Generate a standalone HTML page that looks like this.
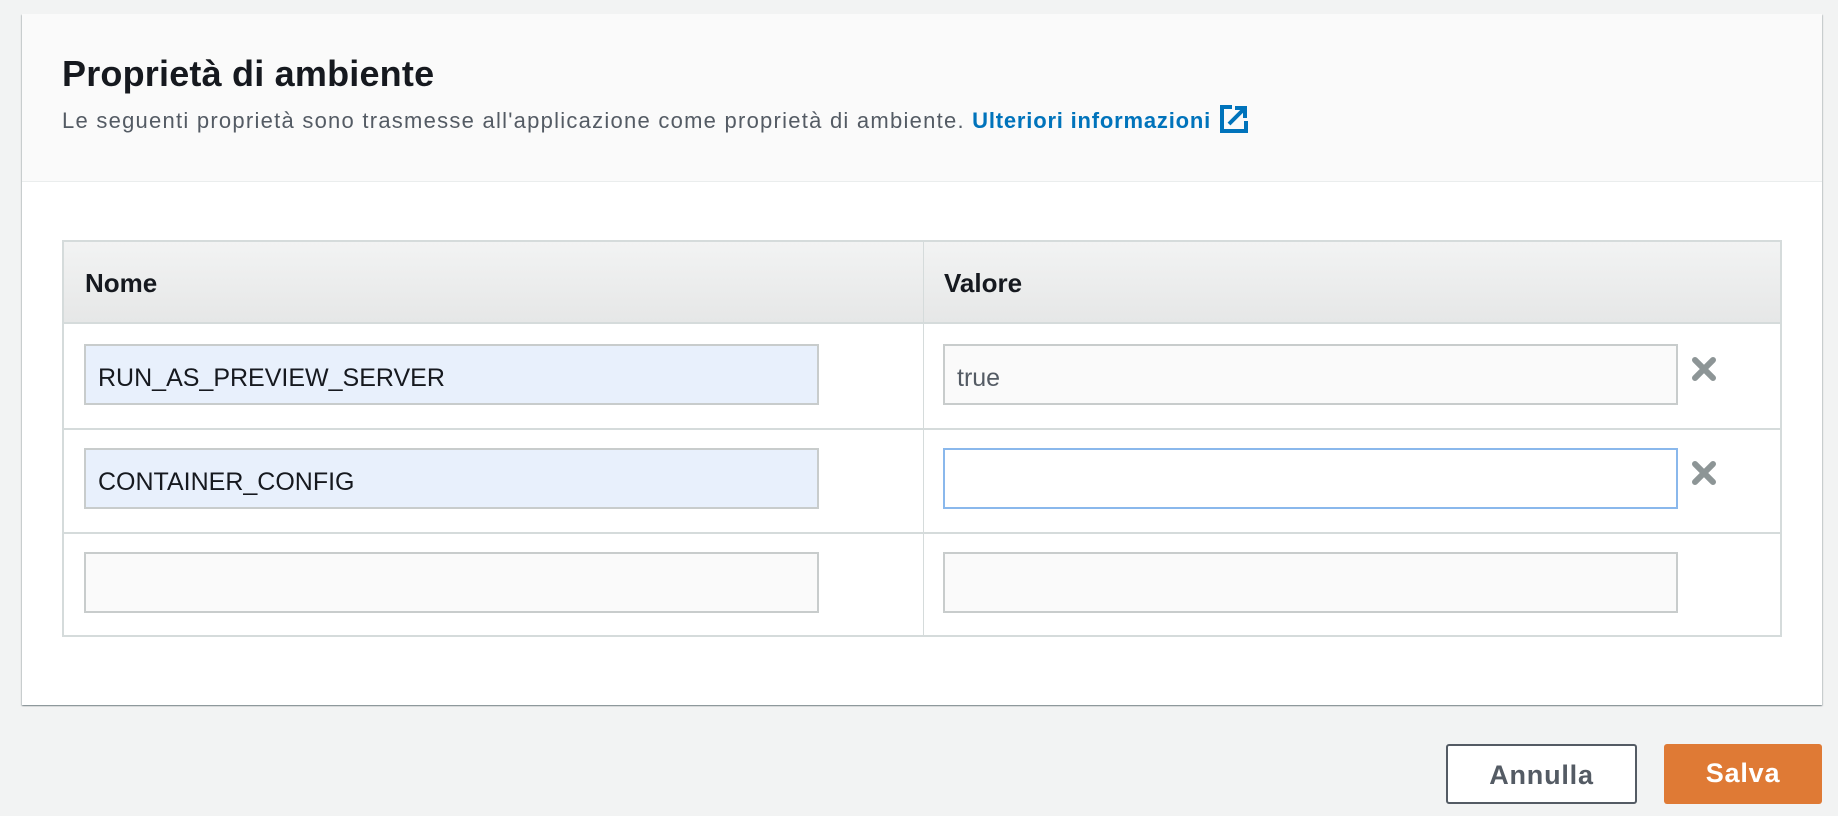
<!DOCTYPE html>
<html><head><meta charset="utf-8"><style>
*{box-sizing:border-box;margin:0;padding:0}
body{width:1838px;height:816px;background:#f2f3f3;font-family:"Liberation Sans",Arial,sans-serif;position:relative;overflow:hidden}
.card{position:absolute;left:22px;top:14px;width:1800px;height:691px;background:#fff;box-shadow:0 1px 1px rgba(0,28,36,.3),1px 1px 1px rgba(0,28,36,.15),-1px 1px 1px rgba(0,28,36,.15)}
.hdr{position:absolute;left:0;top:0;width:100%;height:168px;background:#fafafa;border-bottom:1px solid #eaeded}
h1{position:absolute;left:40px;top:39px;font-size:36px;font-weight:bold;color:#16191f;letter-spacing:0.2px}
.sub{position:absolute;left:40px;top:90px;font-size:22px;color:#545b64;white-space:nowrap;letter-spacing:1.25px}
.sub a{color:#0073bb;font-weight:bold;text-decoration:none;letter-spacing:0.8px}
.sub svg{vertical-align:-6px;margin-left:8px}
.tbl{position:absolute;left:62px;top:240px;width:1720px;height:397px;border:2px solid #d5dbdb}
.th{position:absolute;left:0;top:0;width:100%;height:82px;background:linear-gradient(#f2f3f3,#e6e7e7);border-bottom:2px solid #d5dbdb}
.th span{position:absolute;top:26px;font-size:26px;font-weight:bold;color:#16191f}
.vd{position:absolute;left:859px;top:0;width:1px;height:100%;background:#d5dbdb}
.hl{position:absolute;left:0;width:100%;height:2px;background:#d5dbdb}
.in{position:absolute;height:61px;border:2px solid #c8cccc;background:#fafafa;font-size:25px;color:#16191f;padding:18px 0 0 12px}
.in.a{background:#e8f0fc}
.in.f{background:#fff;border-color:#8ab8ec}
.x{position:absolute;width:26px;height:26px}
.btn{position:absolute;top:744px;height:60px;border-radius:3px;font-size:27px;font-weight:bold;text-align:center;line-height:58px;letter-spacing:0.8px}
</style></head><body>
<div class="card">
 <div class="hdr">
  <h1>Proprietà di ambiente</h1>
  <div class="sub">Le seguenti proprietà sono trasmesse all'applicazione come proprietà di ambiente. <a>Ulteriori informazioni</a><svg width="30" height="30" viewBox="0 0 30 30"><path d="M13 3H3v24h24V17" fill="none" stroke="#0073bb" stroke-width="4"/><path d="M10 20L24 6M16 4h10v10" fill="none" stroke="#0073bb" stroke-width="4"/></svg></div>
 </div>
</div>
<div class="tbl">
 <div class="th"><span style="left:21px">Nome</span><span style="left:880px">Valore</span></div>
 <div class="vd"></div>
 <div class="hl" style="top:186px"></div>
 <div class="hl" style="top:290px"></div>
</div>
<div class="in a" style="left:84px;top:344px;width:735px">RUN_AS_PREVIEW_SERVER</div>
<div class="in" style="left:943px;top:344px;width:735px;color:#545b64">true</div>
<div class="in a" style="left:84px;top:448px;width:735px">CONTAINER_CONFIG</div>
<div class="in f" style="left:943px;top:448px;width:735px"></div>
<div class="in" style="left:84px;top:552px;width:735px"></div>
<div class="in" style="left:943px;top:552px;width:735px"></div>
<svg class="x" style="left:1691px;top:356px" viewBox="0 0 26 26"><path d="M4 4L22 22M22 4L4 22" stroke="#8d9596" stroke-width="6" stroke-linecap="round"/></svg>
<svg class="x" style="left:1691px;top:460px" viewBox="0 0 26 26"><path d="M4 4L22 22M22 4L4 22" stroke="#8d9596" stroke-width="6" stroke-linecap="round"/></svg>
<div class="btn" style="left:1446px;width:191px;border:2px solid #545b64;background:#fff;color:#545b64">Annulla</div>
<div class="btn" style="left:1664px;width:158px;background:#df7a35;color:#fff">Salva</div>
</body></html>
